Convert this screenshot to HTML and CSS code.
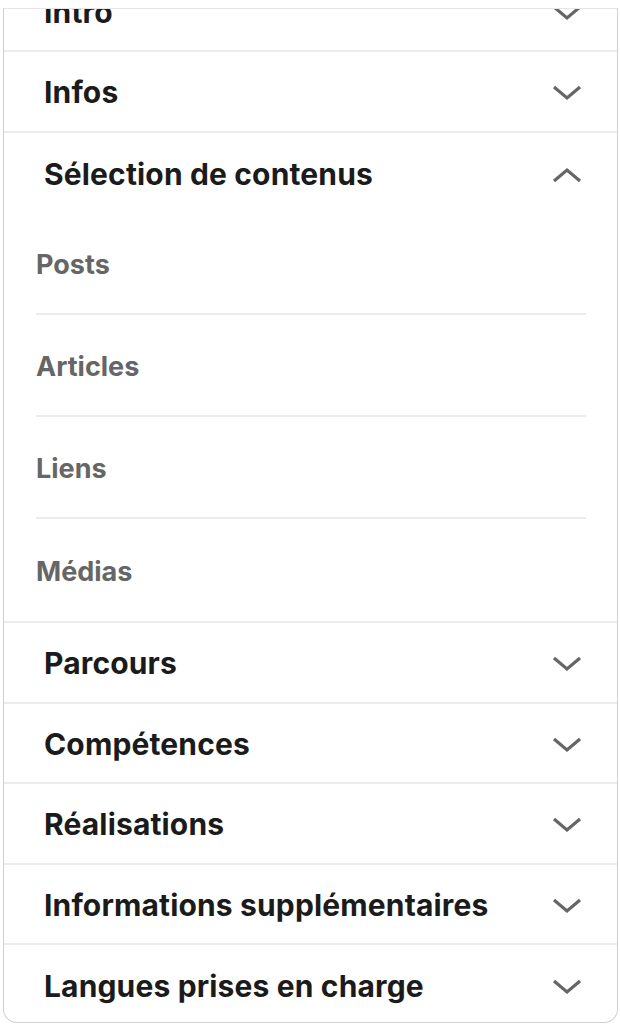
FILE: index.html
```html
<!DOCTYPE html>
<html lang="fr">
<head>
<meta charset="utf-8">
<title>Sections du profil</title>
<link rel="stylesheet" href="styles.css">
</head>
<body>
<div class="panel">
  <ul class="sections">
    <li class="row"><span class="title">Intro</span><svg class="chev" viewBox="0 0 30 16"><polyline points="2,2 15,13 28,2"/></svg></li>
    <li class="row"><span class="title">Infos</span><svg class="chev" viewBox="0 0 30 16"><polyline points="2,2 15,13 28,2"/></svg></li>
    <li class="group">
      <div class="row row-open"><span class="title">Sélection de contenus</span><svg class="chev" viewBox="0 0 30 16"><polyline points="2,14 15,3 28,14"/></svg></div>
      <ul class="subs">
        <li class="sub">Posts</li>
        <li class="sub">Articles</li>
        <li class="sub">Liens</li>
        <li class="sub">Médias</li>
      </ul>
    </li>
    <li class="row"><span class="title">Parcours</span><svg class="chev" viewBox="0 0 30 16"><polyline points="2,2 15,13 28,2"/></svg></li>
    <li class="row"><span class="title">Compétences</span><svg class="chev" viewBox="0 0 30 16"><polyline points="2,2 15,13 28,2"/></svg></li>
    <li class="row"><span class="title">Réalisations</span><svg class="chev" viewBox="0 0 30 16"><polyline points="2,2 15,13 28,2"/></svg></li>
    <li class="row"><span class="title">Informations supplémentaires</span><svg class="chev" viewBox="0 0 30 16"><polyline points="2,2 15,13 28,2"/></svg></li>
    <li class="row row-last"><span class="title">Langues prises en charge</span><svg class="chev" viewBox="0 0 30 16"><polyline points="2,2 15,13 28,2"/></svg></li>
  </ul>
</div>
</body>
</html>
```
FILE: styles.css
```css
* { box-sizing: border-box; }
html, body { margin: 0; padding: 0; }
body {
  background: #ffffff;
  font-family: Inter, "Liberation Sans", Arial, sans-serif;
  width: 620px;
  height: 1024px;
  overflow: hidden;
}
.panel {
  margin: 8px 2px 0 3px;
  height: 1015px;
  background: #fff;
  border: 1px solid #cfcfcf;
  border-top: 1px solid #e6e6e6;
  border-radius: 0 0 14px 14px;
  overflow: hidden;
}
.sections {
  list-style: none;
  margin: -37.5px 0 0 0;
  padding: 0;
}
.row {
  display: flex;
  align-items: center;
  justify-content: space-between;
  height: 80.5px;
  padding: 2px 35px 0 40px;
  border-bottom: 2px solid #ececec;
}
.group { border-bottom: 2px solid #ececec; }
.row-open { border-bottom: none; }
.row-last { border-bottom: none; }
.title {
  font-size: 30px;
  font-weight: 700;
  color: #1b1b1b;
  letter-spacing: 0.15px;
}
.chev {
  width: 30px;
  height: 16px;
  margin-top: 2px;
  fill: none;
  stroke: #666666;
  stroke-width: 3.2;
}
.subs {
  list-style: none;
  margin: 0;
  padding: 0;
}
.sub {
  height: 102px;
  margin: 0 31px 0 32px;
  display: flex;
  align-items: center;
  padding-top: 2px;
  font-size: 27px;
  font-weight: 700;
  color: #666666;
  border-bottom: 2px solid #ebebeb;
}
.sub:last-child { border-bottom: none; }
```
